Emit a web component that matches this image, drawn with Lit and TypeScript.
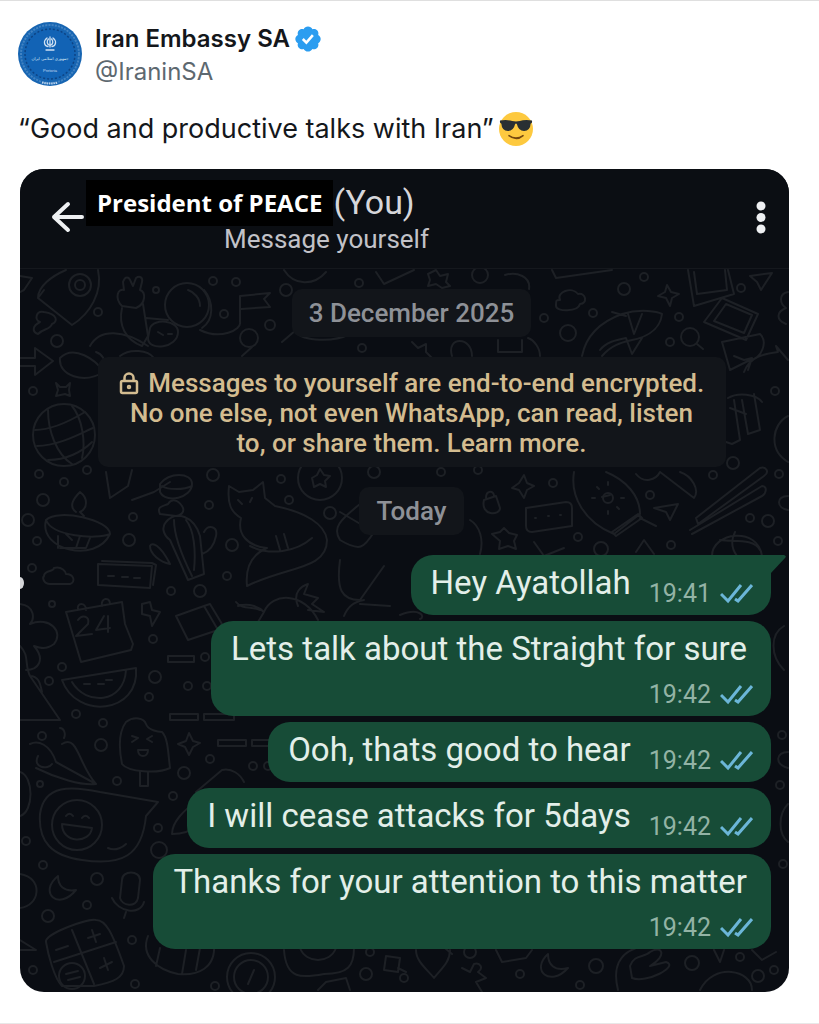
import { LitElement, html, css, svg } from "lit";
import { customElement, property } from "lit/decorators.js";

interface Message {
  text: string;
  time: string;
  tall?: boolean;
  tail?: boolean;
}

const MESSAGES: Message[] = [
  { text: "Hey Ayatollah", time: "19:41", tail: true },
  { text: "Lets talk about the Straight for sure", time: "19:42", tall: true },
  { text: "Ooh, thats good to hear", time: "19:42" },
  { text: "I will cease attacks for 5days", time: "19:42" },
  { text: "Thanks for your attention to this matter", time: "19:42", tall: true },
];

// Small rings scattered between the larger wallpaper drawings: [x, y, radius]
const RINGS: number[][] = [
  [213, 281, 4], [236, 282, 4], [156, 290, 3], [98, 312, 4], [57, 341, 6], [224, 314, 4], [270, 325, 5],
  [286, 290, 6], [359, 283, 4], [362, 348, 4], [33, 391, 4], [39, 474, 4], [64, 482, 4], [87, 470, 4],
  [213, 475, 6], [281, 479, 4], [374, 472, 6], [43, 500, 6], [28, 520, 6], [37, 541, 4], [133, 517, 4],
  [129, 540, 6], [209, 505, 4], [232, 545, 6], [227, 576, 4], [289, 500, 4], [330, 513, 6], [32, 568, 4],
  [171, 591, 4], [200, 591, 6], [52, 604, 3], [153, 639, 4], [62, 667, 4], [49, 681, 4], [155, 677, 6],
  [188, 686, 4], [207, 686, 4], [149, 697, 4], [76, 714, 4], [103, 723, 4], [205, 657, 4], [42, 736, 4],
  [101, 745, 6], [184, 773, 6], [210, 759, 4], [117, 781, 4], [40, 784, 3], [173, 796, 4], [253, 766, 4],
  [268, 766, 4], [158, 828, 4], [159, 850, 8], [43, 865, 4], [97, 879, 6], [26, 841, 4], [87, 905, 4],
  [48, 916, 6], [132, 940, 4], [33, 970, 4], [135, 984, 4], [215, 986, 4], [366, 974, 6], [370, 952, 4],
  [544, 318, 4], [593, 313, 4], [568, 333, 8], [644, 277, 4], [624, 289, 6], [741, 288, 4], [679, 317, 4],
  [670, 342, 4], [775, 391, 4], [733, 463, 6], [713, 475, 4], [779, 474, 4], [650, 495, 4], [553, 483, 4],
  [768, 521, 6], [750, 518, 4], [578, 537, 4], [671, 545, 4], [778, 541, 4], [601, 549, 7], [441, 472, 4],
  [480, 275, 8], [478, 470, 4], [782, 735, 4], [780, 785, 4], [783, 864, 4], [470, 952, 6], [404, 978, 4],
  [520, 974, 4], [580, 985, 4], [596, 966, 7], [692, 963, 7], [740, 957, 4], [758, 976, 6], [774, 970, 4],
];

const wallpaper = svg`
  <g fill="none" stroke="#1d2025" stroke-width="2" stroke-linecap="round" stroke-linejoin="round">
    ${RINGS.map(([x, y, r]) => svg`<circle cx=${x} cy=${y} r=${r}></circle>`)}
    <!-- rocket -->
    <path d="M98 270c5 22-8 44-26 55L38 298c0-12 14-22 28-28M38 298l6-8M44 312c-8-2-10 8-4 10-8 4-8 10-2 12 6-6 12-4 14-10 6-2 6-10-8-12z"/>
    <circle cx="80" cy="285" r="11"/><circle cx="80" cy="285" r="5"/>
    <path d="M20 276l12 2-8 12-4 2"/>
    <!-- astronaut and flag -->
    <path d="M122 306c-8-8-4-18 2-16l-1-8c2-6 6-6 8 0l2 4 3-8c4-3 7 0 6 4l-2 8c6 2 6 14-4 18zM122 308c-4 18 4 32 20 38l6-10-5-32M146 318l22 2"/>
    <circle cx="187" cy="305" r="22"/><path d="M204 290c10 12 10 30-2 38M188 290c6 2 12 8 12 16"/>
    <path d="M150 328c4-10 28-8 28 4 0 16-30 20-30 6zM158 332l5 3M168 334h4M200 330c20 10 42 0 40-8V296l30-3-6 6 6 8-29 2"/>
    <circle cx="249" cy="338" r="9"/><path d="M90 346c10-18 34-16 58 0M242 356l10-9M120 356c10-8 28-6 34 2"/>
    <!-- arrow, ring, spark, globe -->
    <path d="M20 358h15v-10l18 13-18 14v-9H20M60 358c14-14 36 2 44 14-20 12-46 4-44-14zM96 352c6 2 10 8 8 14M56 383l4 4h6l4-4-1 7 1 6-5-2-9 2 2-6z"/>
    <circle cx="64" cy="435" r="31"/>
    <path d="M35 430c18 0 40-12 50-18M37 446c22 0 46-14 56-18M48 460c18 0 34-8 44-18M48 410c0 20 8 44 24 54M72 406c10 12 14 36 10 52"/>
    <!-- drawings above the notice -->
    <path d="M284 270c10 16 30 16 42 2M376 272l8 12 30-14M282 342l14-12c0 10 34 14 54 4M428 274l8-4 4 6 8-2-2 8 4 4-8 2-6-4-8 2 2-6zM505 275c12-4 26 2 24 14M412 342l6 6 8-4v8l6 6H412M452 356c-6-20 20-20 20 0M498 340v12h24v-12M540 356c0-8-6-16-12-18"/>
    <path d="M552 270l4 8 56-8M560 300c-4-8 12-14 18-6 8-2 10 10 2 10-2 8-24 8-24 2s0-6 4-6z"/>
    <path d="M582 356c4-20 18-34 40-42 20-6 36-2 40 0-2 18-20 24-30 26-8 2-20 4-30 16M600 350c6-8 16-10 26-12l6 16 10-16M628 314l6 20 8-20M612 312l14 4"/>
    <circle cx="690" cy="337" r="9"/><path d="M697 344l6 5M667 285l4 7 8 2-7 4-2 8-4-8-8-2 7-4z"/>
    <path d="M688 270l6 36 40-12-6-24M694 272l3 22 30-4-2-20M722 298l36 16-12 26-42-18zM726 304l26 11-8 18-30-12zM722 342l38-8c8 8 2 24-10 26l-20 10zM734 356l10 4 8-2-4 12M744 372c6-16 20-18 34-20l-2-6 12 14M750 276l22-3-11 17-4-8zM788 292c-10 2-8 12-2 16-10 4-10 12 0 16"/>
    <!-- palm and ball -->
    <path d="M728 398c10-6 28-4 34 4M734 400l6 40-8 4M742 400l6 34 12-4-6-36M720 440l12 4M788 416c-16 8-20 34 0 46M730 408l16 6"/>
    <!-- below the notice -->
    <path d="M106 472l4 26 18-12 4-16M132 500l22-8 16-10"/>
    <path d="M160 484c8-12 32-12 32 0 0 14-26 20-32 8zM162 486c6 4 22 4 30 0"/>
    <circle cx="320" cy="478" r="22"/><path d="M312 478l5-3 3-6 4 6 6 1-5 5 1 6-6-3-6 3z"/>
    <path d="M46 520c-8 30 50 44 64 14 0-14-52-26-64-14zM46 520c6 16 50 20 64 14M76 512c-8-6-2-14 4-20 8 6 8 16 0 20l4 4M58 536v12M66 534l6 6M80 536l-4 12M60 548h26l4-10"/>
    <path d="M166 522c10-12 28-6 34 14l4 38-16 6-18-40c-8-6-8-14-4-18zM174 520c0 18 10 40 18 56M186 520c8 10 10 30 8 50M160 514c-4-8 4-8 8-10 4-6 10-4 14 2 4 6-2 10-6 10zM150 546c2-4 10-2 20 18-10-2-20-10-20-18zM204 532c4-8 14-6 12 4s-8 16-14 18"/>
    <!-- cat -->
    <path d="M229 486l10 6 14-2 10-8 2 16 10 8c30 6 50 18 52 34 0 30-40 26-80 46-2-20 6-32 20-38-20-2-30-14-26-30-10-6-14-14-12-32zM250 546c20 10 46 6 62-8M276 536l4 14M284 534l4 14M238 500l4 4M252 498l-2 4"/>
    <path d="M44 576c0-6 10-4 10-8 8-2 12 4 12 6 8 0 10 8 4 10H50c-6 0-8-6-6-8zM98 564l54 2-2 22-52-3zM102 561l50 2 4 2-3 20M108 576h6M122 577h6M134 578h6"/>
    <!-- calendar -->
    <path d="M66 612l56-10 3 22 8 20-2 6-50 12-6-20zM78 610c-2-8 8-8 8 0M102 606c-2-8 8-10 8-2M78 620c4-6 12-4 10 4l-12 12 16-2M104 616l-8 14 14-2M108 616v16M142 604l8-2 2 8 8 2-8 14-2-10-8-2zM176 616l28-10 14 24-30 10zM204 606l6-2 12 20-4 6"/>
    <path d="M20 604c16 2 14 16 10 20 20-8 34 8 24 20-8 6-14 4-20 2 12 14 4 24-8 24M20 646c10 10 4 18 10 30l30 44H20M30 676c8 0 10 6 12 16"/>
    <path d="M62 680c14 40 78 34 74-12l-74 12zM72 682c14 24 52 22 54-12M84 684h6M98 684h6M106 680h6M168 656h26v6h-26zM170 714h28v6h-28zM204 714h30v6h-30z"/>
    <path d="M238 606c12-4 22 2 26 6l-6 10M236 602c6 8 16 4 24 8M298 606c-6-14 4-20 10-22l-4 10 14 4-6 6 12 8-16-2M264 612c8-20 40-20 54 8"/>
    <path d="M340 512l34 20c-10 16-14 20-34 8-8-12 0-20 20-36M340 560c-4 30 2 40 20 40l24-34M360 604l30 2M344 616c4-10 10-14 20-16"/>
    <!-- chat box, rocket and skis -->
    <path d="M526 508l40-6c4 0 6 2 6 6v18l-40 6c-4 0-6-2-6-6zM535 518h1M548 516h1M560 515h1" />
    <path d="M574 472c-4 24 10 50 40 62l26-20c0-18-14-34-34-42M612 532l26-18 4 4-26 18zM640 518l16 8M602 497l8-2"/>
    <circle cx="608" cy="498" r="5"/><path d="M608 485v-3M608 511v3M595 498h-3M621 498h3M599 489l-2-2M617 507l2 2"/>
    <path d="M636 474c8 10 20 6 24-2l34 26c6-8-2-22-14-26M524 475l3 8 7 3-7 4-3 8-5-8-7-2 7-5zM484 500c-4 16 16 16 16 8l-4-12zM486 498c0-8 8-8 8-2M654 508l24-4-8 16-4-8zM696 518l64-50c6-2 10 4 4 8l-66 48zM690 530l72-44c6 0 4 8 0 10l-70 38"/>
    <path d="M712 556c0-24 46-30 50 0M720 540c14 2 34-2 40 10M735 532c-4 8-4 16 2 24M492 534l8-2 4-4 5 5 8 2-3 6 2 8-8-3-9 3 1-8zM534 542l10 14 20-8M470 520c10 6 14 20 10 34M636 552l8-12 10 14M788 496c-12 0-12 12 0 14"/>
    <!-- chillies, lolly, planet -->
    <path d="M30 744c8-4 20 0 26 18l40 22c-14 2-40-6-60-16M62 744c16-10 16 20 34 40M38 756c-6 12 10 14 14 8M60 728c4 0 6 6 4 10"/>
    <path d="M122 764c-4-20-2-34 4-42 8-6 18-4 20 2 2 6 12 8 16 8 6 6 6 20 8 36-12 6-42 4-48-4zM140 772v14h8v-14M132 736l6 2-6 4M152 736l-5 3 5 3M138 750h10c0 8-10 8-10 0zM178 744l8-3 3-8 4 8 7 2-7 4-4 8-4-8zM218 740h28v6h-28zM252 740h24v6h-24z"/>
    <path d="M20 772c14 4 14 40 0 44M40 814c4-30 32-28 60-22l58 10-12 14c-4 40-24 50-64 44-30-4-44-18-42-46z"/>
    <circle cx="77" cy="825" r="25"/><path d="M62 824c0 20 28 20 30 4zM66 816c2-3 5-3 7 0M82 818c2-3 5-3 7 0M108 848c8 4 16-2 18-4M196 792l26-22c10-2 18 4 22 12M172 834c0-12 12-24 24-32M172 834c12 0 20-4 24-8M58 876c-20 16 0 36 18 14-12 2-18-4-18-14zM122 880c0-10 18-10 18 0l-2 18c-2 10-16 8-18 0zM112 898c6 14 28 18 32 4M126 912l-2 6M20 874c24 4 20 32 0 34M20 940l16 10H20"/>
    <!-- calculator -->
    <path d="M46 942c-2-8 42-24 50-22 10 0 16 12 28 46 0 12-10 16-30 20H62c-8-8-14-32-16-44zM72 930l22 54M54 962l62-20M56 950l12-4M88 938l12-4M92 930l4 12M100 968l12-6M104 958l4 12"/>
    <circle cx="72" cy="976" r="13"/><path d="M66 974l12-3M68 980l12-3M148 936c-8 20 10 34 30 38 20 2 38-6 36-30M160 948l-4 18M186 950l-4 24M200 948l-4 22"/>
    <circle cx="251" cy="977" r="24"/><circle cx="251" cy="977" r="17"/><path d="M248 984l6-14M284 950c2 30 18 28 40 24 24 0 30-8 30-26M300 948c6 16 30 16 36 0M386 956l14 2-2 14-14-2zM398 968l8 4M318 990l8-8 20-4 4 12"/>
    <path d="M416 950c0 12 12 20 18 28 8-10 16-16 16-28M496 950l6 12 24-4 6-8M462 968l8 4 4-8c6-2 10 4 4 8l8 6-10 4 6 10M548 954c-18 16 2 34 20 14-14 4-20-4-20-14zM618 990c-6-24 2-36 18-42M630 966c4-12 14-8 20-14 12-8 18 4 0 14l16-4c14 4-20 22-34 16zM700 990c14-28 52-20 52 0M714 950l6 12 4-12M752 950l10 10 14-8"/>
    <path d="M784 626c-14 8-14 30 0 44M788 752c-12 0-14 12 0 16M788 804c-10 10-10 30 0 38M400 615c20-8 26 2 20 4M440 944l12 10"/>
  </g>`;

@customElement("chat-message")
export class ChatMessage extends LitElement {
  @property({ attribute: false }) message!: Message;

  static styles = css`
    :host {
      display: flex;
      justify-content: flex-end;
    }
    .bubble {
      position: relative;
      box-sizing: border-box;
      display: flex;
      min-height: 60px;
      padding: 10px 18px 10px 20px;
      gap: 18px;
      border-radius: 22px;
      background: #174c37;
      color: #e3efe9;
    }
    .tall {
      flex-direction: column;
      align-items: flex-end;
      gap: 13px;
      padding-right: 24px;
      padding-bottom: 6px;
    }
    .tail {
      border-top-right-radius: 0;
    }
    .tip {
      position: absolute;
      left: 100%;
      top: 0;
      width: 15px;
      height: 18px;
      fill: #174c37;
    }
    .text {
      margin: 0;
      font-size: 33px;
      line-height: 36px;
    }
    .meta {
      display: flex;
      align-items: center;
      align-self: flex-end;
      gap: 9px;
      font-size: 25px;
      line-height: 30px;
      color: #93b3a5;
      margin-bottom: -4px;
    }
    .tall .meta {
      margin: 0 -6px 0 0;
    }
    .ticks {
      width: 33px;
      height: 20px;
      fill: none;
      stroke: #6bb6d8;
      stroke-width: 3;
    }
  `;

  render() {
    const { text, time, tall, tail } = this.message;
    return html`<div class="bubble ${tall ? "tall" : ""} ${tail ? "tail" : ""}">
      <p class="text">${text}</p>
      <span class="meta">
        <time>${time}</time>
        <svg class="ticks" viewBox="0 0 33 20" role="img" aria-label="Read">
          <path d="M1 10l7 7L21 1M15 15l3 2L32 1" />
        </svg>
      </span>
      ${tail
        ? html`<svg class="tip" viewBox="0 0 15 18" aria-hidden="true"><path d="M-1 0H13q3 1 1 3L0 18H-1z" /></svg>`
        : ""}
    </div>`;
  }
}

@customElement("app-root")
export class AppRoot extends LitElement {
  static styles = css`
    :host {
      display: block;
      background: #fff;
      color: #14171b;
      font-family: Inter, "Liberation Sans", sans-serif;
    }
    .post {
      box-sizing: border-box;
      min-height: 100vh;
      padding: 21px 30px 30px 20px;
      border-top: 1px solid #dfdfdf;
      border-bottom: 1px solid #e8e8e8;
    }
    .author {
      display: flex;
      align-items: flex-start;
      gap: 13px;
      margin-left: -2px;
    }
    .avatar {
      width: 64px;
      height: 64px;
      flex: none;
    }
    .name {
      display: flex;
      align-items: center;
      gap: 5px;
      margin: 0;
      font-size: 24px;
      line-height: 34px;
      font-weight: 600;
    }
    .badge {
      width: 26px;
      height: 26px;
    }
    .handle {
      display: block;
      font-size: 24px;
      line-height: 32px;
      color: #5d6870;
      text-decoration: none;
    }
    .body {
      display: flex;
      align-items: center;
      gap: 5px;
      margin: 23px 0 22px -2px;
      font-size: 27px;
      line-height: 36px;
    }
    .emoji {
      width: 34px;
      height: 34px;
    }
    .media {
      position: relative;
      overflow: hidden;
      border-radius: 24px;
      background: #0a0d13;
      font-family: Roboto, "Liberation Sans", sans-serif;
    }
    .wallpaper {
      position: absolute;
      inset: 0;
      width: 100%;
      height: 100%;
    }
    .bar {
      position: relative;
      box-sizing: border-box;
      display: flex;
      min-height: 100px;
      padding: 11px 14px 0 30px;
      background: #0b0e13;
      border-bottom: 1px solid #15181d;
      color: #d6d6da;
    }
    .icon {
      display: flex;
      flex: none;
      margin: 0;
      padding: 0;
      border: 0;
      background: none;
      color: #eef0f2;
    }
    .back {
      width: 36px;
      padding-top: 20px;
    }
    .back svg {
      width: 36px;
      height: 34px;
    }
    .menu {
      margin: 18px 0 0 auto;
      width: 28px;
      height: 40px;
    }
    .title {
      display: flex;
      align-items: flex-start;
      margin: 0;
      font-size: 34px;
      line-height: 44px;
      font-weight: 400;
    }
    .alias {
      padding: 0 11px;
      background: #000;
      color: #fff;
      font: 700 24px/46px "Open Sans", sans-serif;
    }
    .subtitle {
      margin: 0 0 0 138px;
      font-size: 26px;
      line-height: 26px;
      color: #c2c2c8;
    }
    .chat {
      position: relative;
      display: flex;
      flex-direction: column;
      align-items: center;
      gap: 20px;
      padding: 20px 18px 43px 32px;
    }
    .pill,
    .notice {
      margin: 0;
      border-radius: 10px;
      background: #12151a;
      text-align: center;
    }
    .pill {
      padding: 0 17px;
      font-size: 26px;
      line-height: 48px;
      font-weight: 500;
      color: #8e9197;
    }
    .notice {
      box-sizing: border-box;
      max-width: 628px;
      padding: 11px 16px 9px;
      font-size: 26px;
      line-height: 30px;
      font-weight: 500;
      color: #d3bc90;
    }
    .notice a {
      color: inherit;
      text-decoration: none;
    }
    .lock {
      width: 20px;
      height: 24px;
      margin-right: 3px;
      vertical-align: -3px;
    }
    .messages {
      align-self: stretch;
      display: flex;
      flex-direction: column;
      gap: 6px;
      margin: 0;
      padding: 0;
      list-style: none;
    }
  `;

  private renderAvatar() {
    return html`<svg class="avatar" viewBox="0 0 64 64" role="img" aria-label="Iran Embassy SA">
      <circle cx="32" cy="32" r="32" fill="#1765b2" />
      <circle cx="32" cy="32" r="29" fill="none" stroke="#6c9fd2" stroke-width="2" stroke-dasharray="2 1" pathLength="170" opacity=".5" />
      <circle cx="32" cy="32" r="25" fill="#1263b5" stroke="#0d4384" stroke-width="1.5" stroke-dasharray="2 2" />
      <g fill="none" stroke="#cfe0f2" stroke-width="1.3" stroke-linecap="round">
        <path d="M32 15v10M29 16c-4 3-3 8 1 8.500M35 16c4 3 3 8-1 8.500M30.500 17c-2 2-1.500 5 .5 6M33.500 17c2 2 1.500 5-.5 6M28 28h8" />
      </g>
      <text x="32" y="38" fill="#dce9f6" font-family="DejaVu Sans, sans-serif" font-size="4" text-anchor="middle">جمهوری اسلامی ایران</text>
      <text x="32" y="50" fill="#c3d9f0" font-family="Liberation Sans, sans-serif" font-size="4" text-anchor="middle">Pretoria</text>
      <path d="M24 60.500q8 2 16 0" fill="none" stroke="#b9d2ec" stroke-width="2" stroke-dasharray="1.500 .8" />
    </svg>`;
  }

  render() {
    return html`<article class="post">
      <header class="author">
        ${this.renderAvatar()}
        <div>
          <h1 class="name">
            Iran Embassy SA
            <svg class="badge" viewBox="0 0 24 24" role="img" aria-label="Verified account">
              <path
                fill="#2b9df0"
                d="M23.700 12c0-1.700-.9-3.100-2.300-3.800.5-1.500.2-3.200-1-4.300-1.100-1.200-2.800-1.500-4.300-1C15.300 1.400 13.800.4 12 .4S8.700 1.400 8 2.900c-1.500-.5-3.200-.2-4.300 1-1.200 1.100-1.500 2.800-1 4.300C1.200 8.900.3 10.300.3 12s1 3.200 2.400 3.900c-.5 1.500-.2 3.200 1 4.300 1.100 1.200 2.800 1.500 4.300 1 .7 1.400 2.200 2.400 4 2.400s3.300-1 4-2.400c1.500.5 3.200.2 4.400-1 1.200-1.100 1.500-2.800 1-4.300 1.400-.7 2.300-2.200 2.300-3.900z"
              />
              <path fill="none" stroke="#fff" stroke-width="2.400" d="M7.200 12l3.300 3.300 6-6.800" />
            </svg>
          </h1>
          <a class="handle" href="#IraninSA">@IraninSA</a>
        </div>
      </header>
      <p class="body">
        “Good and productive talks with Iran”
        <svg class="emoji" viewBox="0 0 36 36" role="img" aria-label="Smiling face with sunglasses">
          <circle cx="18" cy="18" r="18" fill="#fdc93f" />
          <path d="M10.500 25q7.500 5 15 0-7 6-15 0z" fill="#75480f" stroke="#75480f" stroke-width="1.500" stroke-linejoin="round" />
          <path d="M1 9q8-1 13 .5 4 1 8 0Q27 8 35 9v2l-1.500 1.500q-.5 7.500-7 7.500-6 0-7.500-7-1-1.500-2 0-1.500 7-7.500 7-6.500 0-7-7.500L1 11z" fill="#292f33" />
        </svg>
      </p>
      <section class="media" aria-label="Chat">
        <svg class="wallpaper" viewBox="20 169 769 823" preserveAspectRatio="xMinYMin slice" aria-hidden="true">
          ${wallpaper}
          <ellipse cx="20" cy="583" rx="4" ry="6" fill="#d5d5d8" />
        </svg>
        <header class="bar">
          <button class="icon back" aria-label="Back">
            <svg viewBox="0 0 36 34" fill="none" stroke="currentColor" stroke-width="4" stroke-linecap="round" stroke-linejoin="round">
              <path d="M32 17H4M18 4L4 17l14 13" />
            </svg>
          </button>
          <div>
            <h2 class="title"><span class="alias">President of PEACE</span>(You)</h2>
            <p class="subtitle">Message yourself</p>
          </div>
          <button class="icon menu" aria-label="More options">
            <svg width="28" height="40" viewBox="0 0 28 40" fill="currentColor">
              <circle cx="14" cy="8" r="4.500" /><circle cx="14" cy="19.500" r="4.500" /><circle cx="14" cy="31" r="4.500" />
            </svg>
          </button>
        </header>
        <div class="chat">
          <p class="pill">3 December 2025</p>
          <p class="notice">
            <svg class="lock" viewBox="0 0 20 24" fill="none" stroke="currentColor" stroke-width="2.500" aria-hidden="true">
              <rect x="2" y="10" width="16" height="12" rx="1.500" /><path d="M5.500 10V7a4.500 4.500 0 0 1 9 0v3" /><circle cx="10" cy="16" r="1" />
            </svg>
            Messages to yourself are end-to-end encrypted. No one else, not even WhatsApp, can read, listen to, or share
            them. <a href="#learn-more">Learn more.</a>
          </p>
          <p class="pill">Today</p>
          <ol class="messages">
            ${MESSAGES.map((m) => html`<li><chat-message .message=${m}></chat-message></li>`)}
          </ol>
        </div>
      </section>
    </article>`;
  }
}
